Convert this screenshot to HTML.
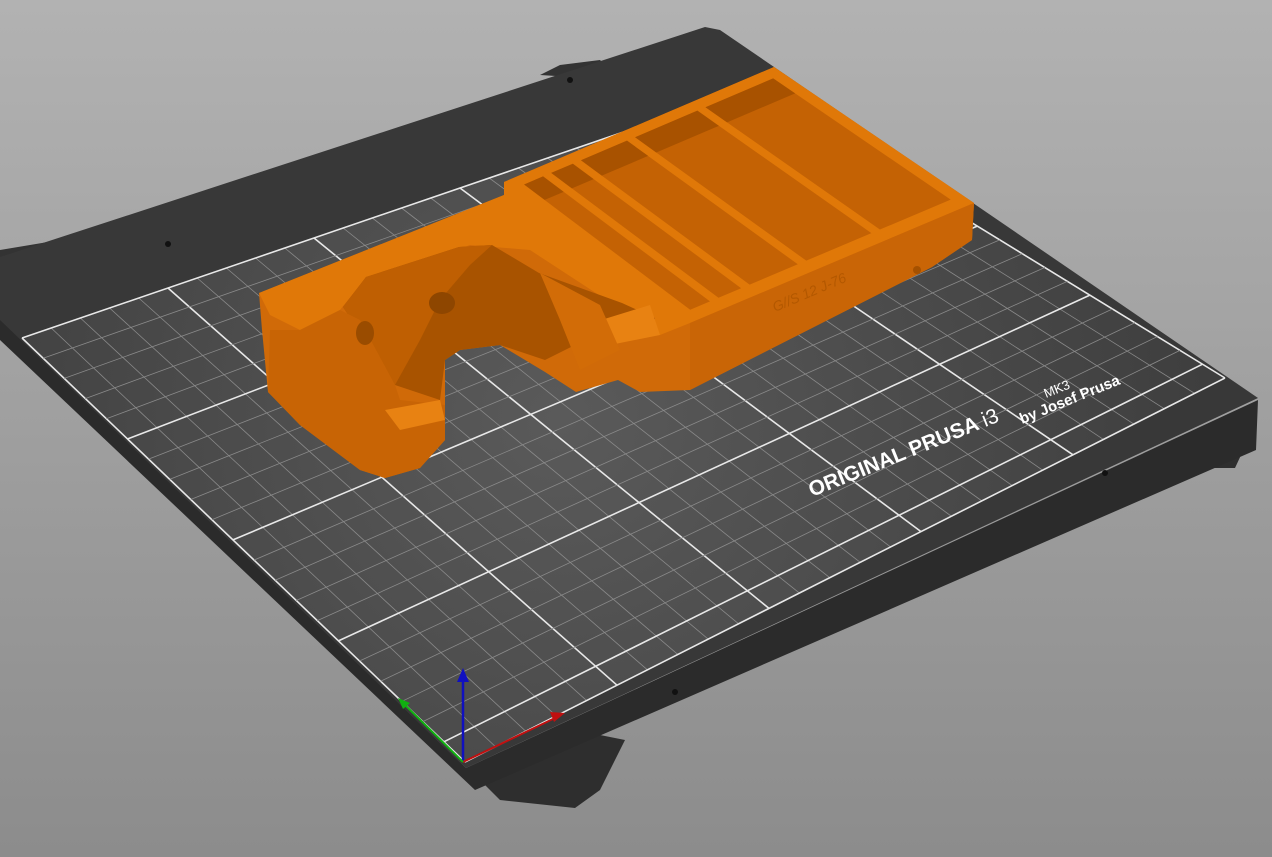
<!DOCTYPE html>
<html><head><meta charset="utf-8"><style>
html,body{margin:0;padding:0;width:1272px;height:857px;overflow:hidden;background:linear-gradient(#b2b2b2,#8c8c8c);}
svg{position:absolute;left:0;top:0}
</style></head><body>
<svg id="s" width="1272" height="857" viewBox="0 0 1272 857" xmlns="http://www.w3.org/2000/svg">
<defs>
<radialGradient id="bedg" cx="560" cy="420" r="700" gradientUnits="userSpaceOnUse">
<stop offset="0" stop-color="#5a5a5a"/><stop offset="1" stop-color="#3c3c3c"/></radialGradient>
</defs>
<polygon points="0,250 60,240 70,262 95,270 130,240 190,222 200,240 0,305" fill="#333"/>
<polygon points="470,770 490,790 500,800 575,808 600,790 625,740 600,735" fill="#2e2e2e"/>
<polygon points="1150,455 1175,468 1235,468 1248,440" fill="#2e2e2e"/>
<polygon points="540,75 560,65 600,60 620,80" fill="#333"/>
<polygon points="0,318 466,768 1258,400 1256,450 475,790 0,340" fill="#2b2b2b"/>
<polygon points="0,257 705,27 720,30 1258,398 466,768 0,320" fill="#383838"/>
<polygon id="grid" points="22,338 752,88 1225,378 465,762" fill="url(#bedg)"/>
<g id="lines"></g>
<circle cx="1105" cy="473" r="3" fill="#111"/><circle cx="675" cy="692" r="3" fill="#111"/>
<circle cx="168" cy="244" r="3" fill="#111"/><circle cx="570" cy="80" r="3" fill="#111"/>
<text x="812" y="497" transform="rotate(-22 812 497)" font-family="Liberation Sans, sans-serif" font-size="21" fill="#fff" font-weight="bold">ORIGINAL PRUSA <tspan font-weight="normal">i3</tspan></text>
<text x="1046" y="398" transform="rotate(-22 1046 398)" font-family="Liberation Sans, sans-serif" font-size="13" fill="#fff">MK3</text>
<text x="1022" y="424" transform="rotate(-22 1022 424)" font-family="Liberation Sans, sans-serif" font-size="15" fill="#fff" font-weight="bold">by Josef Prusa</text>
<g stroke="none">
<polygon points="259,293 504,195 504,182 774,67 974,203 972,240 932,267 690,390 640,392 618,380 576,392 545,372 500,345 460,350 445,360 445,440 420,468 385,478 360,470 300,425 268,392 262,330" fill="#d06a08"/>
<polygon points="259,293 504,195 504,182 774,67 974,203 690,323 660,335 530,250 470,245 360,285 340,310 300,330 270,315" fill="#e07808"/>
<polygon points="690,323 974,203 972,240 932,267 690,390" fill="#c96506"/>
<polygon points="395,385 343,307 366,277 459,247 492,245 539,273 622,303 655,318 650,335 610,330 575,345 545,360 500,345 460,350 445,360 440,400" fill="#a85300"/>
<polygon points="343,307 366,277 459,247 492,245 470,265 440,300 420,340 395,385" fill="#bf5f02"/>
<polygon points="270,330 300,330 340,310 360,320 395,385 400,400 445,405 445,440 420,468 385,478 360,470 300,425 268,392" fill="#c86405"/>
<polygon points="385,410 440,400 445,420 400,430" fill="#e88212"/>
<polygon points="585,325 650,305 660,335 610,345" fill="#e88212"/>
<polygon points="540,273 600,305 620,350 580,370 560,320" fill="#d26c07"/>
<ellipse cx="442" cy="303" rx="13" ry="11" fill="#8e4600"/>
<ellipse cx="365" cy="333" rx="9" ry="12" fill="#9a4c00"/>
<g id="slots"></g>
<text x="775" y="312" transform="rotate(-23 775 312)" font-family="Liberation Sans, sans-serif" font-size="14" font-style="italic" fill="#b35800">G//S 12 J-76</text>
<circle cx="917" cy="270" r="4" fill="#a55100"/>
</g>
<line x1="463" y1="762" x2="463" y2="680" stroke="#1010c0" stroke-width="2.5"/>
<polygon points="457,682 463,668 469,682" fill="#1010c0"/>
<line x1="463" y1="762" x2="555" y2="718" stroke="#c01010" stroke-width="2"/>
<polygon points="550,712 565,713 554,722" fill="#c01010"/>
<line x1="463" y1="762" x2="404" y2="704" stroke="#10b010" stroke-width="2"/>
<polygon points="398,698 410,703 403,709" fill="#10b010"/>
</svg>
<script>
var ns="http://www.w3.org/2000/svg";
function P(a,b,c,d,u,v){return[(1-u)*(1-v)*a[0]+u*(1-v)*b[0]+u*v*c[0]+(1-u)*v*d[0],(1-u)*(1-v)*a[1]+u*(1-v)*b[1]+u*v*c[1]+(1-u)*v*d[1]];}
var A=[22,338],B=[752,88],C=[1225,378],D=[465,762];
var g=document.getElementById("lines");
function ln(p,q,c,w){var l=document.createElementNS(ns,"line");l.setAttribute("x1",p[0]);l.setAttribute("y1",p[1]);l.setAttribute("x2",q[0]);l.setAttribute("y2",q[1]);l.setAttribute("stroke",c);l.setAttribute("stroke-width",w);g.appendChild(l);}
var NU=25,NV=21;
for(var i=0;i<=NU;i++){var u=i/NU;var m=(i%5==0);ln(P(A,B,C,D,u,0),P(A,B,C,D,u,1),m?"#e8e8e8":"#8a8a8a",m?1.6:0.8);}
for(var j=0;j<=NV;j++){var v=j/NV;var m=(j%5==0)||j==NV;ln(P(A,B,C,D,0,v),P(A,B,C,D,1,v),m?"#e8e8e8":"#8a8a8a",m?1.6:0.8);}
var a=[504,182],b=[774,67],c=[974,203],d=[690,323];
var s=document.getElementById("slots");
function poly(p,fill){var e=document.createElementNS(ns,"polygon");e.setAttribute("points",p.map(function(x){return x.join(",")}).join(" "));e.setAttribute("fill",fill);s.appendChild(e);}
[[0.04,0.11],[0.14,0.22],[0.25,0.42],[0.45,0.68],[0.71,0.96]].forEach(function(r){
poly([P(a,b,c,d,r[0],0.05),P(a,b,c,d,r[1],0.05),P(a,b,c,d,r[1],0.94),P(a,b,c,d,r[0],0.94)],"#c46204");
poly([P(a,b,c,d,r[0],0.05),P(a,b,c,d,r[1],0.05),P(a,b,c,d,r[1],0.16),P(a,b,c,d,r[0],0.16)],"#a85200");
});
</script>
</body></html>
